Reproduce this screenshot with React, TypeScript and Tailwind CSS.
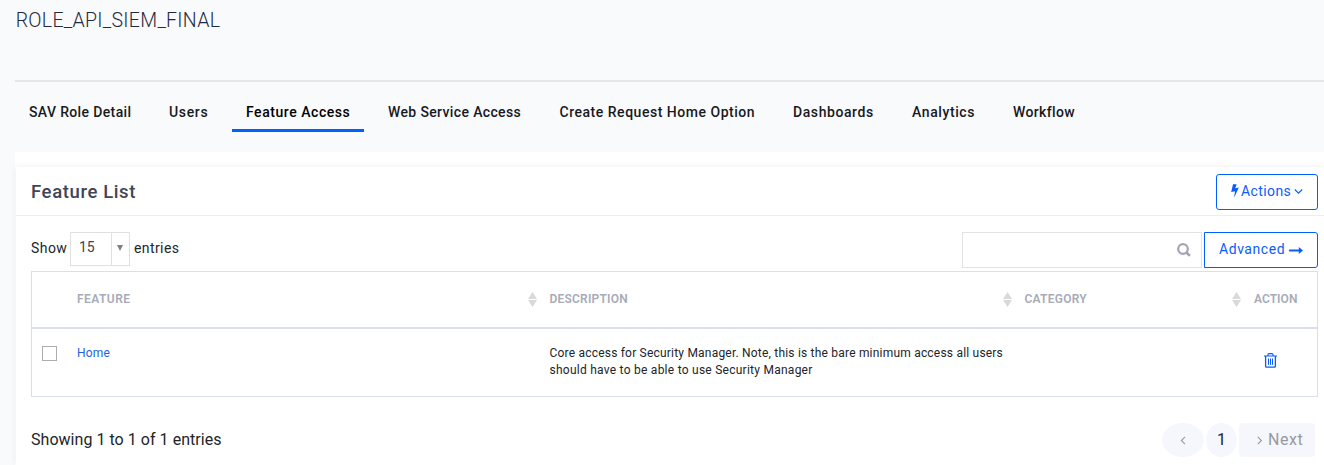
import type { ReactNode } from "react";

const tabs = [
  { label: "SAV Role Detail", box: "w-[130px] tracking-[0.36px]" },
  { label: "Users", box: "w-[67px] tracking-[0.65px]" },
  { label: "Feature Access", box: "w-[132px] tracking-[0.55px]", active: true },
  { label: "Web Service Access", box: "w-[161.5px] tracking-[0.36px]" },
  { label: "Create Request Home Option", box: "w-[223.5px] tracking-[0.52px]" },
  { label: "Dashboards", box: "w-[109px] tracking-[0.58px]" },
  { label: "Analytics", box: "w-[91px] tracking-[0.6px]" },
  { label: "Workflow", box: "w-[90px] tracking-[0.37px]" },
];

function SortIcon() {
  return (
    <svg className="mt-px shrink-0" width="9" height="15" viewBox="0 0 9 15" fill="#d9d9d9">
      <path d="M4.5 0 9 7H0zM0 8h9l-4.5 7z" />
    </svg>
  );
}

function Bolt() {
  return (
    <svg width="8" height="14" viewBox="0 0 8 14" fill="currentColor">
      <path d="M2 .3h3.7L4.2 4.3l3.6-.8L3.1 13.8l.9-6.6-3.8.9z" />
    </svg>
  );
}

function Chevron({ d, className = "" }: { d: string; className?: string }) {
  return (
    <svg className={className} width="9" height="9" viewBox="0 0 9 9" fill="none" stroke="currentColor" strokeWidth="1.1">
      <path d={d} />
    </svg>
  );
}

function SearchIcon() {
  return (
    <svg width="14" height="14" viewBox="0 0 14 14" fill="none" stroke="#a4a3b5" strokeWidth="2.2">
      <circle cx="6" cy="6" r="4.8" />
      <path d="m9.3 9.3 3.6 3.6" strokeWidth="2.6" />
    </svg>
  );
}

function LongArrow() {
  return (
    <svg width="14" height="7" viewBox="0 0 14 7" fill="currentColor">
      <path d="M.4 2.5h9.4V.1L14 3.5 9.8 6.9V4.5H.4Q0 4.5 0 4.1V2.9Q0 2.5.4 2.5z" />
    </svg>
  );
}

function Trash() {
  return (
    <svg width="13" height="15" viewBox="0 0 13 15" fill="none" stroke="#0a5cff">
      <path d="M0 3h13M4 3V1.6Q4 .6 5 .6h3q1 0 1 1V3" strokeWidth="1.1" />
      <path d="M1.6 3v10.2q0 1 1 1h7.8q1 0 1-1V3" strokeWidth="1.3" />
      <path d="M4.5 5.5v6.3M6.5 5.5v6.3M8.5 5.5v6.3" strokeWidth="1" />
    </svg>
  );
}

function Heading({ children, className }: { children: ReactNode; className: string }) {
  return <div className={`flex h-full items-center pb-px ${className}`}>{children}</div>;
}

export default function App() {
  return (
    <div className="flex h-[465px] w-full flex-col overflow-hidden bg-[#f9fafc] pl-[15px] font-['Roboto',sans-serif] text-[#212529]">
      <header className="h-[80px] pt-[7px] pl-[0.7px]">
        <h1 className="text-[19.5px] leading-[28px] font-light tracking-[0.29px] text-[#1f2a3c]">ROLE_API_SIEM_FINAL</h1>
      </header>
      <nav className="flex h-[72px] shrink-0 gap-[10px] border-t-2 border-[#e5e6e8] pt-[12px]">
        {tabs.map((t) => (
          <a
            key={t.label}
            className={`flex h-[38px] shrink-0 items-center border-b-[3px] pt-[2px] pl-[14px] text-[14px] font-medium whitespace-nowrap ${t.box} ${t.active ? "border-[#0061ff] text-black" : "border-transparent text-[#17191c]"}`}
          >
            {t.label}
          </a>
        ))}
      </nav>
      <main className="flex-1 bg-white pt-[15px] pl-px">
        <section className="h-[298px] bg-white shadow-[0_0_6px_rgba(69,65,120,0.09)]">
          <div className="flex h-[49px] items-center justify-between border-b border-[#ebedf2] pr-[6px] pl-[15px]">
            <h2 className="pt-[2px] text-[18.5px] leading-[24px] font-medium tracking-[0.62px] text-[#3f4457]">Feature List</h2>
            <button className="mt-[2px] flex h-[36px] w-[102px] items-center rounded-[3px] border border-[#0061ff] pb-[2px] pl-[14px] text-[14px] tracking-[0.4px] text-[#0a5cff]">
              <Bolt />
              <span className="ml-[2px]">Actions</span>
              <Chevron d="m.8 2.5 3.7 3.7 3.7-3.7" className="ml-[2.5px]" />
            </button>
          </div>
          <div className="flex h-[55px] justify-between pt-[16px] pr-[6px] pl-[15px]">
            <div className="flex h-[34px] items-center text-[14px]">
              <span className="w-[39px] pb-[2px] tracking-[0.45px]">Show</span>
              <div className="flex h-[34px] w-[60px] border border-[#e0e0e0]">
                <span className="flex w-[41px] items-center border-r border-[#e0e0e0] pb-[3px] pl-[8px] tracking-[-0.2px] text-[#444]">15</span>
                <span className="flex flex-1 justify-center pt-[12px] pr-px">
                  <svg width="6" height="6" viewBox="0 0 6 6" fill="#808080">
                    <path d="M0 0h6L3 6z" />
                  </svg>
                </span>
              </div>
              <span className="ml-[4px] pb-[2px] tracking-[0.4px]">entries</span>
            </div>
            <div className="flex gap-[2px]">
              <div className="flex h-[36px] w-[240px] items-center justify-end border border-[#e2e3e5] pr-[10px] pb-px">
                <SearchIcon />
              </div>
              <button className="flex h-[36px] w-[114px] items-center rounded-r-[3px] border border-[#0061ff] pl-[14px] text-[14px] text-[#0a5cff]">
                <span className="w-[69.5px] pb-[2px] text-left tracking-[0.55px]">Advanced</span>
                <LongArrow />
              </button>
            </div>
          </div>
          <div className="mr-[6px] ml-[15px] h-[126px] border border-[#dadeef] text-[12px]">
            <div className="flex h-[57px] items-center border-b-2 border-[#dadeef] font-semibold text-[#a7abb8]">
              <Heading className="w-[505px] justify-between pl-[45px]">
                <span className="tracking-[0.45px]">FEATURE</span>
                <SortIcon />
              </Heading>
              <Heading className="w-[475px] justify-between pl-[12.5px]">
                <span className="tracking-[0.2px]">DESCRIPTION</span>
                <SortIcon />
              </Heading>
              <Heading className="w-[229px] justify-between pl-[12.5px]">
                <span className="tracking-[0.24px]">CATEGORY</span>
                <SortIcon />
              </Heading>
              <Heading className="flex-1 pl-[13px]">
                <span className="tracking-[0.05px]">ACTION</span>
              </Heading>
            </div>
            <div className="flex h-[67px] pt-[16px] leading-[17px]">
              <div className="flex w-[45px] pt-px pl-[10px]">
                <span className="h-[15px] w-[15px] border border-[#adadad] bg-white" />
              </div>
              <a className="w-[472.5px] tracking-[0.2px] text-[#1d64dc]">Home</a>
              <div className="w-[475px] whitespace-nowrap">
                <p className="tracking-[0.205px]">Core access for Security Manager. Note, this is the bare minimum access all users</p>
                <p className="tracking-[0.255px]">should have to be able to use Security Manager</p>
              </div>
              <div className="flex flex-1 justify-end pt-[8px] pr-[40px]">
                <Trash />
              </div>
            </div>
          </div>
          <footer className="flex justify-between pt-[26px] pr-[9px] pl-[15px] text-[16px]">
            <span className="leading-[33px] tracking-[0.04px]">Showing 1 to 1 of 1 entries</span>
            <div className="flex h-[34px] gap-[2px] text-[#96999f]">
              <span className="flex w-[42px] items-center justify-center rounded-[50%] bg-[#f6f7fd]">
                <Chevron d="M6 .9 2.4 4.5 6 8.1" />
              </span>
              <span className="flex w-[31px] items-center justify-center rounded-[50%] bg-[#f6f7fd] text-[#212529]">1</span>
              <span className="flex w-[76px] items-center rounded-[4px] bg-[#f6f7fd] pl-[15.5px]">
                <Chevron d="M2.8.9 6.4 4.5 2.8 8.1" />
                <span className="ml-[4.5px] tracking-[0.55px]">Next</span>
              </span>
            </div>
          </footer>
        </section>
      </main>
    </div>
  );
}
